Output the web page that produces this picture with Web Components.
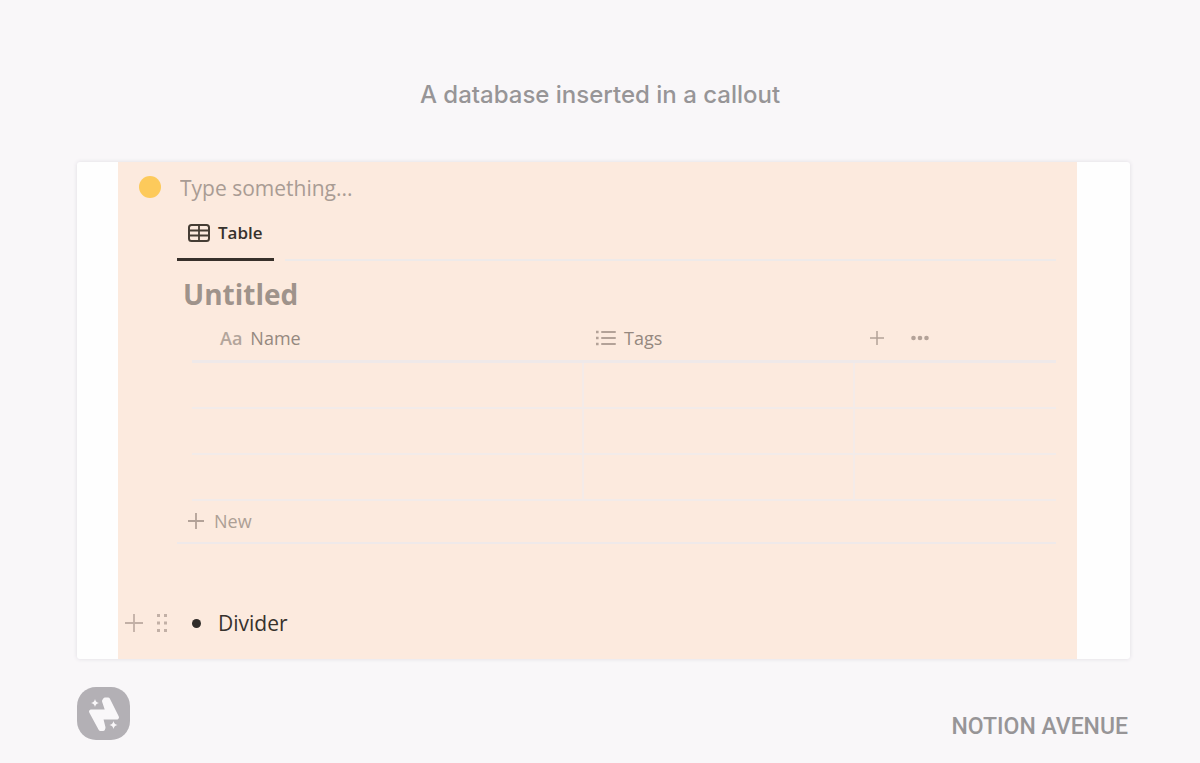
<!DOCTYPE html>
<html lang="en">
<head>
<meta charset="utf-8">
<meta name="viewport" content="width=device-width, initial-scale=1">
<title>A database inserted in a callout</title>
<style>
body { margin: 0; background: #f9f7f9; font-family: "Open Sans", "Noto Sans", sans-serif; color: #37322d; }
</style>
</head>
<body>
<showcase-page>
  <span slot="title">A database inserted in a callout</span>
  <callout-block>
    <database-view heading="Untitled"></database-view>
    <bullet-block slot="after">Divider</bullet-block>
  </callout-block>
  <brand-footer slot="footer">NOTION AVENUE</brand-footer>
</showcase-page>
<script>
const define = (name, html, init) => customElements.define(name, class extends HTMLElement {
  connectedCallback() {
    if (this.shadowRoot) return;
    const template = document.createElement('template');
    template.innerHTML = html;
    this.attachShadow({ mode: 'open' }).append(template.content.cloneNode(true));
    if (init) init(this);
  }
});

define('showcase-page', `
<style>
:host { display: block; padding: 78px 0 20px; }
h1 { margin: 0 0 50px; text-align: center; font: 500 24px/34px Inter, sans-serif; color: #979597; }
.content { margin: 0 70px 0 77px; }
.frame { background: #fefefe; border-radius: 3px; padding: 0 53px 0 41px; box-shadow: 0 0 4px #dfdce2; }
</style>
<h1><slot name="title"></slot></h1>
<div class="content">
<main class="frame"><slot></slot></main>
<slot name="footer"></slot>
</div>`);

define('callout-block', `
<style>
:host { display: block; background: #fceade; padding: 10px 0 18px; }
.main { display: grid; grid-template-columns: 38px minmax(0, 1fr); padding: 0 21px; }
.dot { width: 22px; height: 22px; border-radius: 50%; background: #fdca5b; margin-top: 4px; }
input { display: block; box-sizing: border-box; width: 100%; height: 32px; margin: 0 0 4px; padding: 0 3px; border: 0; outline: 0; background: none; font: 21px/32px "Open Sans", sans-serif; color: #37322d; }
input::placeholder { color: #a99c94; opacity: 1; }
</style>
<div class="main">
  <span class="dot"></span>
  <div><input type="text" aria-label="Callout text" placeholder="Type something..."><slot></slot></div>
</div>
<slot name="after"></slot>`);

define('line-icon', `
<style>
:host { display: inline-flex; flex: none; }
svg { display: block; fill: none; stroke: currentColor; }
.solid { fill: currentColor; stroke: none; }
</style>`, host => {
  const shapes = {
    table: [22, 18, '<rect x="1" y="1" width="20" height="16" rx="2.5" stroke-width="2"/><path d="M1 6.5H21M1 11.5H21M11 1V17" stroke-width="1.8"/>'],
    list: [20, 16, '<path d="M6 2H19M6 8H19M6 14H19" stroke-width="2" stroke-linecap="round"/><path class="solid" d="M0 .8h2.6v2.4H0zM0 6.8h2.6v2.4H0zM0 12.8h2.6v2.4H0z"/>'],
    plus: [14, 14, '<path d="M7 0V14M0 7H14" stroke-width="1.5"/>'],
    newplus: [16, 16, '<path d="M8 0V16M0 8H16" stroke-width="1.8"/>'],
    bigplus: [18, 20, '<path d="M9 1V19M0 10H18" stroke-width="1.8"/>'],
    more: [18, 6, '<g class="solid"><circle cx="2.5" cy="3" r="2.3"/><circle cx="9" cy="3" r="2.3"/><circle cx="15.5" cy="3" r="2.3"/></g>'],
    grip: [12, 20, '<path class="solid" d="M1 1h3v3H1zM8 1h3v3H8zM1 8.5h3v3H1zM8 8.5h3v3H8zM1 16h3v3H1zM8 16h3v3H8z"/>']
  };
  const [w, h, body] = shapes[host.getAttribute('name')];
  host.shadowRoot.innerHTML += `<svg width="${w}" height="${h}" viewBox="0 0 ${w} ${h}" aria-hidden="true">${body}</svg>`;
});

define('database-view', `
<style>
:host { display: block; }
button { font: inherit; color: inherit; background: none; border: 0; padding: 0; margin: 0; display: inline-flex; align-items: center; }
.tabs { display: flex; align-items: flex-end; height: 53px; background: linear-gradient(#eeeae9, #eeeae9) 100% 51px / calc(100% - 108px) 2px no-repeat; }
.tab { box-sizing: border-box; height: 53px; gap: 8px; padding: 0 11px; border-bottom: 3px solid #37302a; font-size: 17px; font-weight: 600; line-height: 24px; }
h2 { margin: 14px 0 4px; padding-left: 6px; font-size: 28px; line-height: 38px; font-weight: 700; color: #9f938b; }
.grid { padding-left: 15px; }
table { width: 100%; border-collapse: separate; border-spacing: 0; table-layout: fixed; }
.name { width: 390px; } .tags { width: 271px; }
th, td { box-sizing: border-box; padding: 0; border-bottom: 2px solid #f2ebe9; }
th { height: 46px; border-bottom: 3px solid #efe9e9; padding-bottom: 2px; text-align: left; font-size: 18px; font-weight: 400; line-height: 24px; color: #95887f; }
td { height: 46px; }
td + td { border-left: 2px solid #f4ebe8; }
.head { display: flex; align-items: center; gap: 8px; padding-left: 14px; }
.name .head { padding-left: 28px; }
.aa { font-weight: 600; color: #b3a59b; }
line-icon { color: #b3a298; }
.tab line-icon { color: #453d34; }
.actions { gap: 27px; padding-left: 17px; }
.new { display: flex; width: 100%; height: 43px; padding: 0 0 1px 11px; gap: 10px; box-sizing: border-box; border-bottom: 2px solid #efe9e9; font-size: 18px; color: #ad9f95; }
</style>
<div class="tabs" role="tablist"><button class="tab" role="tab" aria-selected="true"><line-icon name="table"></line-icon>Table</button></div>
<h2></h2>
<div class="grid"><table>
<thead><tr>
<th class="name"><div class="head"><span class="aa">Aa</span><span>Name</span></div></th>
<th class="tags"><div class="head"><line-icon name="list"></line-icon><span>Tags</span></div></th>
<th><div class="head actions"><button aria-label="Add property"><line-icon name="plus"></line-icon></button><button aria-label="More options"><line-icon name="more"></line-icon></button></div></th>
</tr></thead>
<tbody><tr><td></td><td></td><td></td></tr><tr><td></td><td></td><td></td></tr><tr><td></td><td></td><td></td></tr></tbody>
</table></div>
<button class="new"><line-icon name="newplus"></line-icon>New</button>`,
host => { host.shadowRoot.querySelector('h2').textContent = host.getAttribute('heading'); });

define('bullet-block', `
<style>
:host { display: flex; align-items: center; height: 36px; margin-top: 61px; padding-left: 7px; font-size: 21px; line-height: 36px; }
button { display: flex; border: 0; padding: 0; margin: 0 13px 0 0; background: none; color: #c2b0a6; }
ul { margin: 0 0 0 11px; padding: 0; list-style: none; }
li { display: flex; align-items: center; gap: 17px; }
li::before { content: ""; width: 9px; height: 9px; border-radius: 50%; background: #302c29; }
</style>
<button aria-label="Add block"><line-icon name="bigplus"></line-icon></button>
<button aria-label="Drag block"><line-icon name="grip"></line-icon></button>
<ul><li><slot></slot></li></ul>`);

define('brand-footer', `
<style>
:host { display: flex; align-items: flex-end; justify-content: space-between; padding: 28px 2px 0 0; font: 500 23px/26px Roboto, sans-serif; color: #979597; }
svg { display: block; }
</style>
<svg width="53" height="53" viewBox="0 0 53 53" role="img" aria-label="Logo">
<rect width="53" height="53" rx="19" fill="#b3b0b5"/>
<g fill="#f9f7f9" stroke="#f9f7f9" stroke-linejoin="round">
<path stroke-width="4" d="M28 12.500H31L40 30.500H24L26.500 40.500L26 42H23.500L14 24.500H30.500L27 14Z"/>
<path stroke="none" d="M18 12Q18.700 15.300 22 16Q18.700 16.700 18 20Q17.300 16.700 14 16Q17.300 15.300 18 12ZM36.500 34Q37.200 37.300 40.500 38Q37.200 38.700 36.500 42Q35.800 38.700 32.500 38Q35.800 37.300 36.500 34Z"/>
</g></svg>
<span><slot></slot></span>`);
</script>
</body>
</html>
